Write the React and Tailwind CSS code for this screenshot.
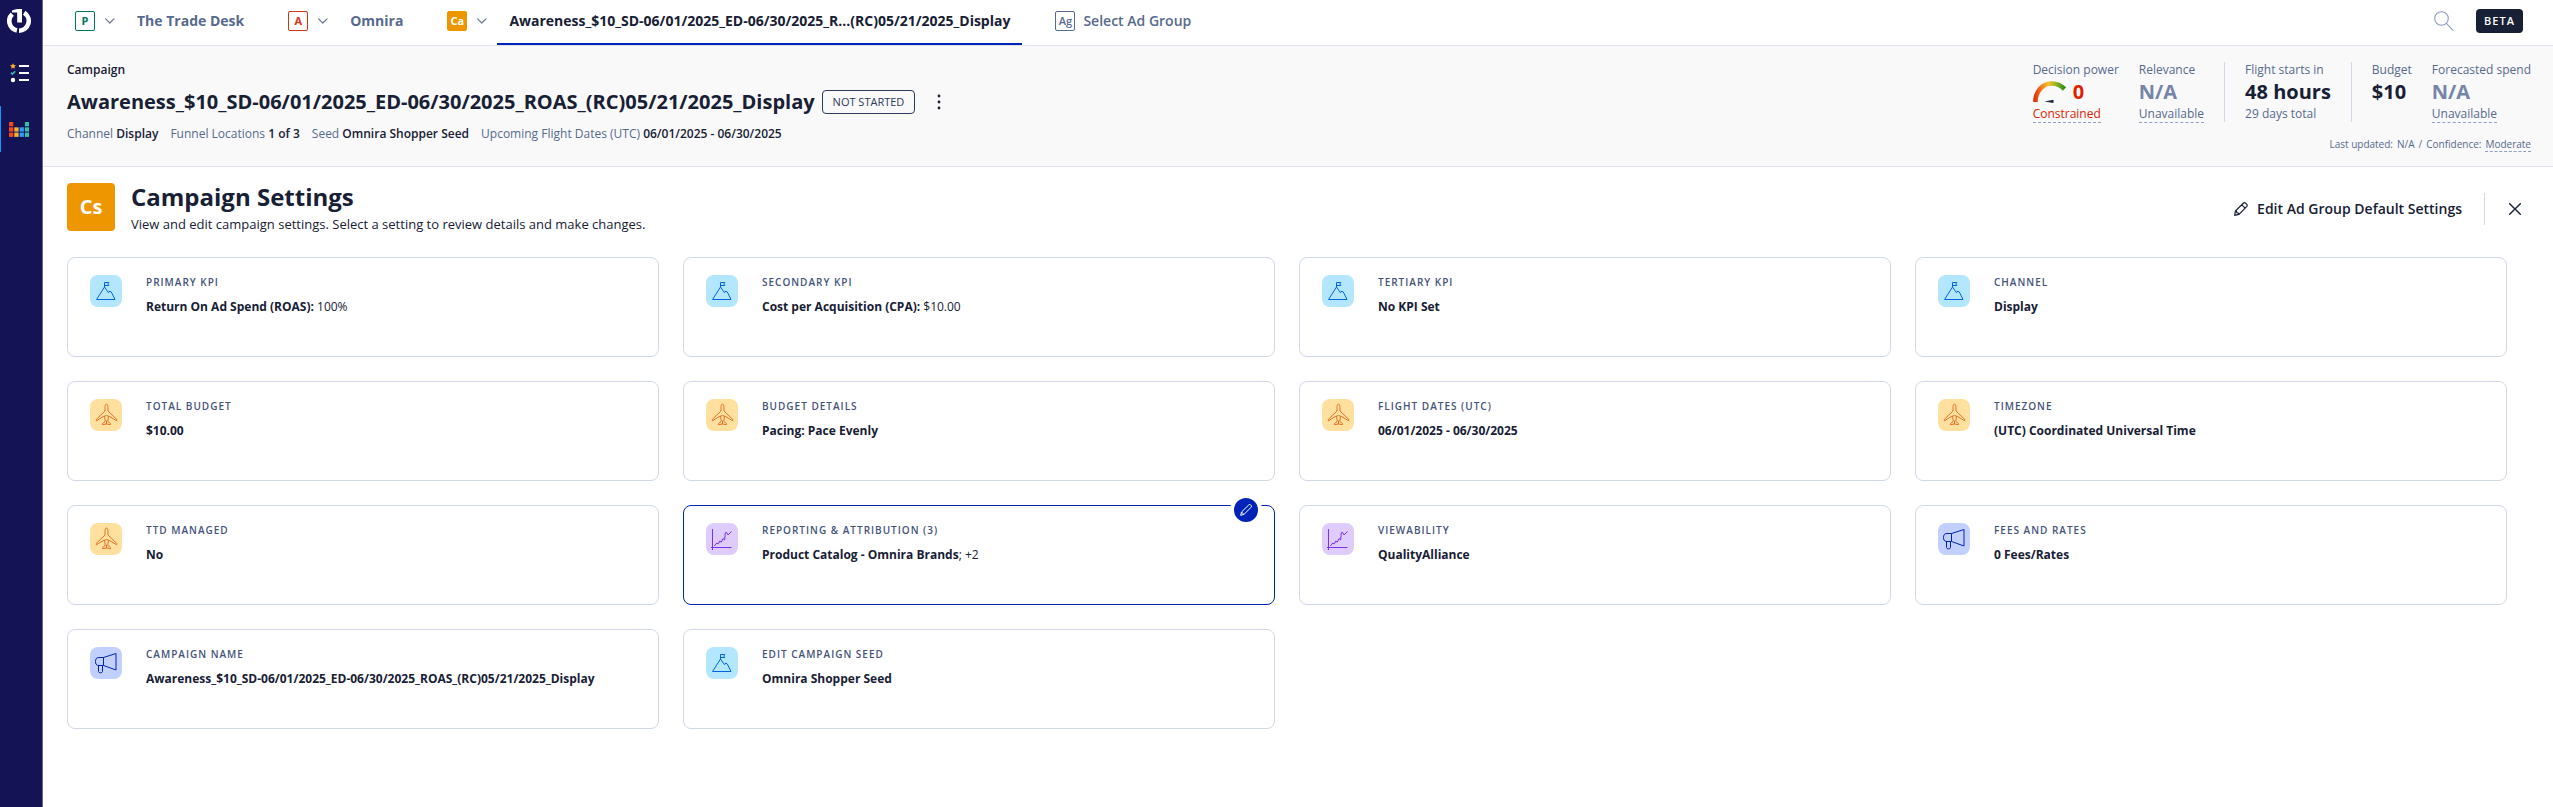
import React from "react";

function Logo() {
  return (
    <svg className="size-6" viewBox="0 0 24 24" fill="none" aria-hidden="true">
      <path d="M5 1.6 Q8 0 10.5 0 H15 V13.6 H10.2 V3.6 H5 Z" fill="#fff" />
      <path d="M5.2 5.1 A9.7 9.7 0 0 0 9.9 21.5" stroke="#fff" strokeWidth="4.6" />
      <path d="M17.2 3.8 A9.7 9.7 0 0 1 12 21.7" stroke="#fff" strokeWidth="4.6" />
    </svg>
  );
}

function ListIcon() {
  return (
    <svg className="h-5 w-[19px]" viewBox="0 0 19 20" fill="none" aria-hidden="true">
      <path d="M3 .2l.9 1.900 2.100.2-1.600 1.400.5 2.100L3 4.700l-1.900 1.100.5-2.100L0 2.300l2.100-.2z" fill="#fcb02d" />
      <path d="M1 9.600l1.500 1.500L5.200 8.200" stroke="#36bfa3" strokeWidth="1.600" />
      <circle cx="3" cy="17" r="2.200" fill="#fff" />
      <path d="M9 3h10M9 10h10M9 17h10" stroke="#fff" strokeWidth="2" />
    </svg>
  );
}

function BarsIcon() {
  const cols = [
    ["#fa4616", 3],
    ["#fcb02d", 2],
    ["#2f9bff", 2],
    ["#36bfa3", 3],
  ];
  return (
    <svg className="h-[15px] w-5" viewBox="0 0 20 15" aria-hidden="true">
      {cols.map(([fill, count], c) =>
        Array.from({ length: count }, (_, r) => (
          <rect key={`${c}-${r}`} x={c * 5.3} y={10.6 - r * 5.3} width="4.300" height="4.300" fill={fill} />
        ))
      )}
    </svg>
  );
}

function Chevron() {
  return (
    <svg className="h-[6px] w-[10px]" viewBox="0 0 10 6" fill="none" stroke="#6b7794" strokeWidth="1.200" strokeLinecap="round" strokeLinejoin="round" aria-hidden="true">
      <path d="M.6.8L4.800 5 9 .8" />
    </svg>
  );
}

function Pencil({ className }) {
  return (
    <svg className={className} viewBox="0 0 14 14" fill="none" stroke="currentColor" strokeWidth="1.200" strokeLinecap="round" strokeLinejoin="round" aria-hidden="true">
      <path d="M1.400 9L9.300 1.300a1.700 1.700 0 0 1 2.400 0l.9.900a1.700 1.700 0 0 1 0 2.400L5 12.400l-4.300.9z M7.800 2.900l3.300 3.300M1.400 9l1.200.3.300 1.700 1.700.2.400 1.200" />
    </svg>
  );
}

function SlimPencil() {
  return (
    <svg className="size-3" viewBox="0 0 12 12" fill="none" stroke="#fff" strokeWidth="1" strokeLinejoin="round" aria-hidden="true">
      <path d="M.7 11.300l.8-3.300L8.800.9a1.300 1.300 0 0 1 1.900 0l.4.400a1.300 1.300 0 0 1 0 1.900L3.900 10.500zM1.500 8l2.400 2.500" />
    </svg>
  );
}

function Gauge() {
  return (
    <svg className="h-[22px] w-[34px]" viewBox="0 0 34 22" fill="none" aria-hidden="true">
      <defs>
        <linearGradient id="gauge" x1="0" y1="0" x2="34" y2="0" gradientUnits="userSpaceOnUse">
          <stop offset="0" stopColor="#e01e00" />
          <stop offset=".2" stopColor="#f06a1a" />
          <stop offset=".45" stopColor="#fbc02d" />
          <stop offset=".7" stopColor="#8bb320" />
          <stop offset="1" stopColor="#14800f" />
        </linearGradient>
      </defs>
      <path d="M2.500 21C2.500 10 10 2.500 19 2.500c5 0 9 2 12.500 5.500" stroke="url(#gauge)" strokeWidth="4.600" />
      <path d="M11.500 20.500L20.500 18.800v3.200z" fill="#1a2540" />
    </svg>
  );
}

function Mountain() {
  return (
    <svg className="size-8" viewBox="0 0 32 32" fill="none" stroke="#0063e0" strokeWidth="1" strokeLinejoin="round" aria-hidden="true">
      <path d="M6.500 24.500H25l-3.700-7.500-1.500-1-1.300 1.700-4-5.700z" />
      <path d="M14.500 12V7.500h4.300L17.800 9l1 1.500h-4.300" />
    </svg>
  );
}

function Plane() {
  return (
    <svg className="size-8" viewBox="0 0 32 32" fill="none" stroke="#e0661a" strokeWidth=".9" strokeLinejoin="round" aria-hidden="true">
      <path d="M16.500 5c-1 0-1.500 2-1.500 3.500V12L6.300 20.300v1.500L13.500 17.500l1.200.2.500 4.800-2.700 2v1.200l4-.7 4 .7v-1.200l-2.700-2 .5-4.800 1.200-.2 7.200 4.300v-1.500L18 12V8.500C18 7 17.500 5 16.500 5z" />
      <path d="M13.500 17.500l3-1 3 1M16.500 21.500V25" />
    </svg>
  );
}

function LineChart() {
  return (
    <svg className="size-8" viewBox="0 0 32 32" fill="none" stroke="#7b2ff2" strokeWidth="1" strokeLinejoin="round" aria-hidden="true">
      <path d="M6.500 6v21M5 24.500h20.500" />
      <path d="M8.500 23l2.200-3 1.600.8 1.500-2.800 1.500 1.200 1.700-3.700 1.600 1.500.7-7.200 1.400-.3 1.300 2.500 3.500-3.500" />
    </svg>
  );
}

function Megaphone() {
  return (
    <svg className="size-8" viewBox="0 0 32 32" fill="none" stroke="#0023b8" strokeWidth="1" strokeLinejoin="round" aria-hidden="true">
      <path d="M13.500 10.500H9C6 10.500 5.500 12.500 5.500 14.500S6 18.500 9 18.500h4.500zM13.500 10.500l12.500-4V23l-12.500-4.500" />
      <path d="M8.500 18.500v6c0 1.800 4 1.800 4 0v-6" />
    </svg>
  );
}

const icons = {
  goal: ["bg-[#b3e6ff]", Mountain],
  flight: ["bg-[#ffe09e]", Plane],
  report: ["bg-[#dfccff]", LineChart],
  promo: ["bg-[#c2d0ff]", Megaphone],
};

const settings = [
  { icon: "goal", label: "PRIMARY KPI", value: "Return On Ad Spend (ROAS):", extra: " 100%" },
  { icon: "goal", label: "SECONDARY KPI", value: "Cost per Acquisition (CPA):", extra: " $10.00" },
  { icon: "goal", label: "TERTIARY KPI", value: "No KPI Set" },
  { icon: "goal", label: "CHANNEL", value: "Display" },
  { icon: "flight", label: "TOTAL BUDGET", value: "$10.00" },
  { icon: "flight", label: "BUDGET DETAILS", value: "Pacing: Pace Evenly" },
  { icon: "flight", label: "FLIGHT DATES (UTC)", value: "06/01/2025 - 06/30/2025" },
  { icon: "flight", label: "TIMEZONE", value: "(UTC) Coordinated Universal Time" },
  { icon: "flight", label: "TTD MANAGED", value: "No" },
  { icon: "report", label: "REPORTING & ATTRIBUTION (3)", value: "Product Catalog - Omnira Brands", extra: "; +2", active: true },
  { icon: "report", label: "VIEWABILITY", value: "QualityAlliance" },
  { icon: "promo", label: "FEES AND RATES", value: "0 Fees/Rates" },
  { icon: "promo", label: "CAMPAIGN NAME", value: "Awareness_$10_SD-06/01/2025_ED-06/30/2025_ROAS_(RC)05/21/2025_Display" },
  { icon: "goal", label: "EDIT CAMPAIGN SEED", value: "Omnira Shopper Seed" },
];

function SettingCard({ icon, label, value, extra, active }) {
  const [tint, Icon] = icons[icon];
  return (
    <div className={`relative flex h-[100px] items-start gap-6 rounded-lg border px-[22px] py-[17px] ${active ? "border-[#0023b8]" : "border-[#d0d7e6]"}`}>
      <span className={`size-8 shrink-0 rounded-lg ${tint}`}>
        <Icon />
      </span>
      <div className="min-w-0">
        <h3 className="text-[10px] leading-[14px] font-semibold tracking-[1px] text-[#44537a]">{label}</h3>
        <p className="mt-[10px] text-[12px] leading-4 text-[#172035]">
          <strong className="font-bold">{value}</strong>
          {extra}
        </p>
      </div>
      {active && (
        <button type="button" aria-label={`Edit ${label}`} className="absolute -top-3 right-3 flex size-8 items-center justify-center rounded-full bg-white">
          <span className="flex size-6 items-center justify-center rounded-full bg-[#0023b8]">
            <SlimPencil />
          </span>
        </button>
      )}
    </div>
  );
}

function LevelButton({ code, label, className }) {
  return (
    <button type="button" aria-label={label} className="flex items-center gap-[10px]">
      <span className={`flex size-5 items-center justify-center rounded-xs border text-[11px] leading-4 font-bold ${className}`}>{code}</span>
      <Chevron />
    </button>
  );
}

function Fact({ label, children }) {
  return (
    <span>
      {label} <span className="font-semibold text-[#172035]">{children}</span>
    </span>
  );
}

function Metric({ label, value, note, valueClass = "text-[#172035]", noteClass = "" }) {
  return (
    <div>
      <div>{label}</div>
      <div className={`mt-[2px] flex h-6 items-center gap-[6px] text-[20px] leading-6 font-bold ${valueClass}`}>{value}</div>
      {note && <div className={`mt-[2px] w-fit ${noteClass}`}>{note}</div>}
    </div>
  );
}

const dashed = "border-b border-dashed border-[#8fa0c4]";

export default function App() {
  return (
    <div className="flex min-h-screen bg-white font-['Open_Sans','Noto_Sans',sans-serif] text-[#172035]">
      <aside className="flex w-[43px] shrink-0 flex-col items-center border-r border-[#6b6b80] bg-[#131356] pt-[9px]">
        <a href="#home" aria-label="Home" className="mr-1">
          <Logo />
        </a>
        <a href="#tasks" aria-label="Tasks" className="mt-[30px] mr-1">
          <ListIcon />
        </a>
        <a href="#campaigns" aria-label="Campaigns" className="mt-[23px] flex h-[46px] w-full items-center justify-center border-l border-[#0a96ff] pr-[5px]">
          <BarsIcon />
        </a>
      </aside>

      <div className="min-w-0 flex-1">
        <div className="flex h-[46px] items-stretch justify-between border-b border-[#dfe4ef] pr-[30px] pl-8">
          <nav aria-label="Hierarchy" className="flex items-stretch text-[14px] leading-5 font-bold whitespace-nowrap text-[#566a8e] *:pb-[3px]">
            <LevelButton code="P" label="Partner menu" className="border-[#00785a] text-[#00785a]" />
            <a href="#partner" className="mr-[22px] flex items-center px-[22px]">The Trade Desk</a>
            <LevelButton code="A" label="Advertiser menu" className="border-[#d8350f] text-[#d8350f]" />
            <a href="#advertiser" className="mr-[22px] flex items-center px-[22px]">Omnira</a>
            <LevelButton code="Ca" label="Campaign menu" className="border-[#ed9600] bg-[#ed9600] text-white" />
            <a href="#campaign" aria-current="page" className="ml-[10px] flex items-center px-3 text-[#172035] shadow-[inset_0_-2px_0_#0023b8]">
              Awareness_$10_SD-06/01/2025_ED-06/30/2025_R...(RC)05/21/2025_Display
            </a>
            <a href="#adgroup" className="ml-[33px] flex items-center gap-2 font-semibold">
              <span className="flex size-5 items-center justify-center rounded-xs border border-[#566a8e] text-[11px] leading-4">Ag</span>
              Select Ad Group
            </a>
          </nav>
          <div className="flex items-center gap-[22px] pb-[3px]">
            <button type="button" aria-label="Search">
              <svg className="size-5" viewBox="0 0 20 20" fill="none" stroke="#8c9bbd" strokeWidth="1.100" strokeLinecap="round" aria-hidden="true">
                <circle cx="7.500" cy="7.500" r="6.800" />
                <path d="M12.400 12.400L19 19.300" />
              </svg>
            </button>
            <span className="flex h-6 items-center rounded-sm bg-[#172035] px-2 text-[11px] leading-4 font-semibold tracking-[1px] text-white">BETA</span>
          </div>
        </div>

        <header className="flex h-[121px] justify-between border-b border-[#dfe4ef] bg-[#f9f9f9] pt-4 pr-[22px] pl-6 text-[12px] leading-4 whitespace-nowrap text-[#566a8e]">
          <div>
            <div className="font-semibold text-[#172035]">Campaign</div>
            <div className="mt-[10px] flex h-[28px] items-center">
              <h1 className="text-[20px] leading-6 font-bold text-[#172035]">Awareness_$10_SD-06/01/2025_ED-06/30/2025_ROAS_(RC)05/21/2025_Display</h1>
              <span className="ml-[7px] flex h-6 items-center rounded-sm border border-[#2c3a5c] px-[10px] text-[11px] leading-4 text-[#2c3a5c]">NOT STARTED</span>
              <button type="button" aria-label="More actions" className="ml-4 flex size-4 items-center justify-center">
                <svg className="h-4 w-1" viewBox="0 0 4 16" fill="#172035" aria-hidden="true">
                  <circle cx="2" cy="2" r="1.400" />
                  <circle cx="2" cy="8" r="1.400" />
                  <circle cx="2" cy="14" r="1.400" />
                </svg>
              </button>
            </div>
            <div className="mt-[10px] flex gap-3">
              <Fact label="Channel">Display</Fact>
              <Fact label="Funnel Locations">1 of 3</Fact>
              <Fact label="Seed">Omnira Shopper Seed</Fact>
              <Fact label="Upcoming Flight Dates (UTC)">06/01/2025 - 06/30/2025</Fact>
            </div>
          </div>
          <div className="flex flex-col items-end">
            <div className="flex h-[62px] gap-5">
              <Metric label="Decision power" value={<><Gauge />0</>} valueClass="text-[#e01e00]" note="Constrained" noteClass={`text-[#e01e00] ${dashed}`} />
              <Metric label="Relevance" value="N/A" valueClass="text-[#7585a8]" note="Unavailable" noteClass={dashed} />
              <span className="h-[60px] w-px bg-[#d0d7e6]" />
              <Metric label="Flight starts in" value="48 hours" note="29 days total" />
              <span className="h-[60px] w-px bg-[#d0d7e6]" />
              <Metric label="Budget" value="$10" />
              <Metric label="Forecasted spend" value="N/A" valueClass="text-[#7585a8]" note="Unavailable" noteClass={dashed} />
            </div>
            <div className="mt-[13px] flex gap-1 text-[10px] leading-[14px]">
              <span>Last updated:</span>
              <span>N/A</span>
              <span>/</span>
              <span>Confidence:</span>
              <span className={dashed}>Moderate</span>
            </div>
          </div>
        </header>

        <main className="pt-4 pr-[46px] pl-6">
          <div className="-mr-[38px] flex items-center justify-between">
            <div className="flex items-start gap-4">
              <span className="flex size-12 items-center justify-center rounded-sm bg-[#ed9600] text-[20px] leading-6 font-bold text-white">Cs</span>
              <div>
                <h2 className="text-[24px] leading-7 font-bold">Campaign Settings</h2>
                <p className="mt-[3px] text-[13px] leading-5">View and edit campaign settings. Select a setting to review details and make changes.</p>
              </div>
            </div>
            <div className="flex items-center">
              <button type="button" className="flex items-center gap-[9px] text-[14px] leading-5 font-semibold">
                <Pencil className="size-[14px]" />
                Edit Ad Group Default Settings
              </button>
              <span className="ml-[22px] h-8 w-px bg-[#d0d7e6]" />
              <button type="button" aria-label="Close" className="px-6">
                <svg className="size-3" viewBox="0 0 12 12" fill="none" stroke="#172035" strokeWidth="1.400" strokeLinecap="round" aria-hidden="true">
                  <path d="M.7.7l10.600 10.600M11.300.7L.7 11.300" />
                </svg>
              </button>
            </div>
          </div>
          <div className="mt-[23px] grid grid-cols-4 gap-6">
            {settings.map((s) => (
              <SettingCard key={s.label} {...s} />
            ))}
          </div>
        </main>
      </div>
    </div>
  );
}
